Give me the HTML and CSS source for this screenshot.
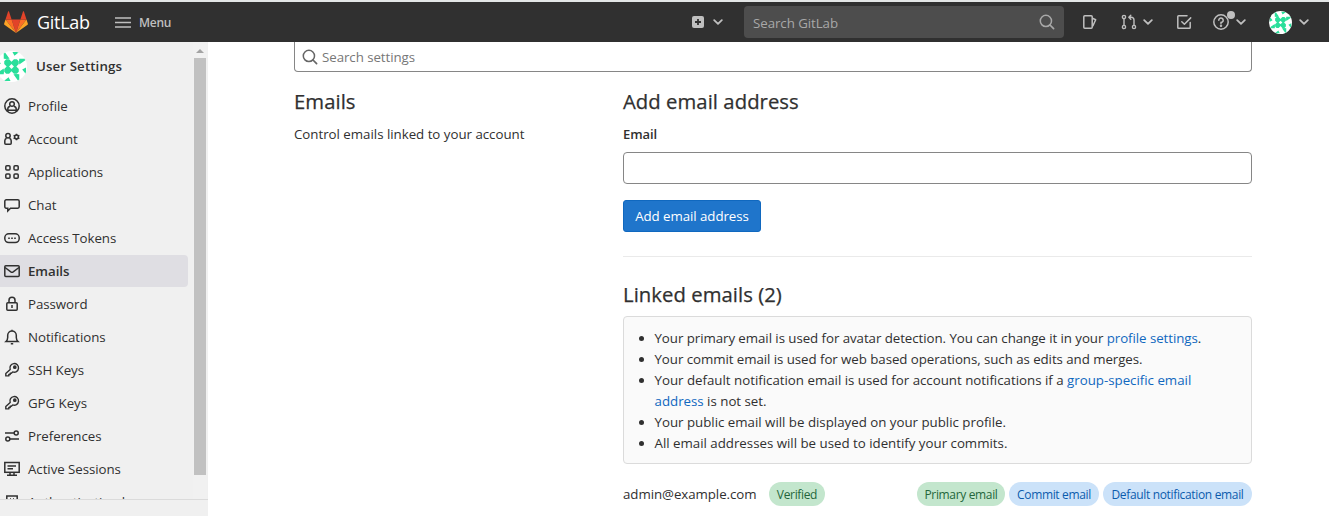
FILE: index.html
```html
<!DOCTYPE html>
<html lang="en">
<head>
<meta charset="utf-8">
<title>Emails · User Settings · GitLab</title>
<link rel="stylesheet" href="styles.css">
</head>
<body>
<svg class="defs" width="0" height="0">
  <symbol id="chevron" viewBox="0 0 10 6"><path d="M1.2 1.2 5 4.8l3.8-3.6" fill="none" stroke="currentColor" stroke-width="1.8" stroke-linecap="round" stroke-linejoin="round"/></symbol>
  <symbol id="search" viewBox="0 0 16 16"><circle cx="6.9" cy="6.9" r="5.6" fill="none" stroke="currentColor" stroke-width="1.5"/><path d="m11 11 3.6 3.6" stroke="currentColor" stroke-width="1.7" stroke-linecap="round"/></symbol>
  <symbol id="key" viewBox="0 0 16 16"><path d="M6.200 7.400a4.300 4.300 0 1 1 2.500 2.500L7.300 11.200H6.200v1.300H4.800v1.400H1.800v-2.300z" fill="none" stroke="currentColor" stroke-width="1.400" stroke-linejoin="round"/><circle cx="10.800" cy="5.200" r="1.100" fill="currentColor"/></symbol>
  <symbol id="avatar" viewBox="0 0 32 32">
    <rect width="32" height="32" fill="#fff"/>
    <g fill="#2adf9b">
      <path d="M10.500 8.500h3l2.500 2.500 2.500-2.500h3l2 2v3L21 16l2.500 2.500v3l-2 2h-3L16 21l-2.500 2.500h-3l-2-2v-3L11 16l-2.500-2.500v-3z"/>
      <g id="wing"><path d="M9 1l5 7H9zM17 1h7l-5 4zM24 8h7l-7 5z"/></g>
      <use href="#wing" transform="rotate(90 16 16)"/><use href="#wing" transform="rotate(180 16 16)"/><use href="#wing" transform="rotate(270 16 16)"/>
    </g>
    <path d="M16 13.500l2.500 2.500-2.500 2.500-2.500-2.500z" fill="#fff"/>
  </symbol>
</svg>
<header class="navbar">
  <svg class="logo" width="24" height="23" viewBox="0 0 24 23"><path d="M12 22 7.600 8.600h8.800z" fill="#e24329"/><path d="M12 22 7.600 8.600H1.500z" fill="#fc6d26"/><path d="M1.500 8.600.1 12.700c-.1.400 0 .8.300 1L12 22z" fill="#fca326"/><path d="M1.500 8.600h6.100L5 .6c-.1-.4-.7-.4-.9 0z" fill="#e24329"/><path d="m12 22 4.400-13.400h6.100z" fill="#fc6d26"/><path d="m22.500 8.600 1.400 4.100c.1.400 0 .8-.3 1L12 22z" fill="#fca326"/><path d="M22.500 8.600h-6.100L19 .6c.1-.4.7-.4.900 0z" fill="#e24329"/></svg>
  <span class="brand">GitLab</span>
  <svg class="burger" width="16" height="11" viewBox="0 0 16 11"><path d="M0 1h16M0 5.500h16M0 10h16" stroke="currentColor" stroke-width="1.300"/></svg>
  <span class="menu">Menu</span>
  <span class="spacer"></span>
  <svg class="plus" width="12" height="12" viewBox="0 0 12 12"><rect width="12" height="12" rx="2" fill="currentColor"/><path d="M6 3v6M3 6h6" stroke="#303030" stroke-width="1.800"/></svg>
  <svg class="chev" width="10" height="6"><use href="#chevron"/></svg>
  <div class="search-box"><span>Search GitLab</span><svg width="16" height="16"><use href="#search"/></svg></div>
  <svg class="issues" width="16" height="16" viewBox="0 0 16 16" fill="none" stroke="currentColor" stroke-width="1.500" stroke-linejoin="round"><rect x="1.800" y="1.800" width="8.400" height="12.400" rx="1"/><path d="M10.400 4.300l3.300 1.500-3 6.400"/></svg>
  <svg class="merge" width="16" height="16" viewBox="0 0 16 16" fill="none" stroke="currentColor" stroke-width="1.400" stroke-linecap="round" stroke-linejoin="round"><circle cx="3" cy="3" r="1.600"/><circle cx="3" cy="13" r="1.600"/><circle cx="13" cy="13" r="1.600"/><path d="M3 4.800v6.400M13 11.200V6a2.700 2.700 0 0 0-2.700-2.700H8.200M9.800 1.300l-2 2 2 2"/></svg>
  <svg class="chev c2" width="10" height="6"><use href="#chevron"/></svg>
  <svg class="todo" width="16" height="16" viewBox="0 0 16 16" fill="none" stroke="currentColor" stroke-width="1.500" stroke-linecap="round" stroke-linejoin="round"><path d="M11 1.800H2.600a.8.800 0 0 0-.8.800v10.800c0 .5.300.8.800.8h10.800c.5 0 .8-.3.800-.8V8.500M5.800 7.800l2.600 2.500 6.300-6.400"/></svg>
  <span class="help"><svg width="16" height="16" viewBox="0 0 16 16" fill="none" stroke="currentColor" stroke-width="1.500"><circle cx="8" cy="8" r="7.200"/><path d="M5.800 6.300A2.200 2.200 0 1 1 8 8.400v1" stroke-linecap="round"/><circle cx="8" cy="11.700" r=".5"/></svg><i class="dot"></i></span>
  <svg class="chev c3" width="10" height="6"><use href="#chevron"/></svg>
  <svg class="avatar-sm" width="23" height="23"><use href="#avatar"/></svg>
  <svg class="chev c4" width="10" height="6"><use href="#chevron"/></svg>
</header>
<div class="page">
  <aside class="sidebar">
    <div class="scroller">
      <nav class="nav">
        <div class="context"><svg class="avatar" width="31" height="31"><use href="#avatar"/></svg><span>User Settings</span></div>
        <a class="item"><svg viewBox="0 0 16 16"><circle cx="8" cy="8" r="7.200"/><circle cx="8" cy="6" r="2.300"/><path d="M3.800 13.500V11A2.500 2.500 0 0 1 6 8.500M12.200 13.500V11A2.500 2.500 0 0 0 10 8.500M4 12.300h8"/></svg><span>Profile</span></a>
        <a class="item"><svg viewBox="0 0 16 16"><circle cx="4" cy="4.800" r="2.200"/><path d="M2.600 7.200C1.300 7.600.8 8.600.8 9.800v2.400c0 .6.400 1 1 1h4.400c.6 0 1-.4 1-1V9.800c0-1.200-.5-2.200-1.800-2.600"/><circle cx="12.500" cy="6" r="1.900"/><path d="M12.500 2.700v1.600M12.500 7.700v1.600M9.600 4.300l1.400.8M14 6.900l1.400.8M9.600 7.700l1.400-.8M14 5.100l1.400-.8"/></svg><span>Account</span></a>
        <a class="item"><svg viewBox="0 0 16 16"><rect x="1.800" y="1.800" width="4.200" height="4.200" rx="1"/><rect x="10" y="1.800" width="4.200" height="4.200" rx="1"/><rect x="1.800" y="10" width="4.200" height="4.200" rx="1"/><rect x="10" y="10" width="4.200" height="4.200" rx="1"/></svg><span>Applications</span></a>
        <a class="item"><svg viewBox="0 0 16 16"><path d="M2.200 2.800h11.600c.8 0 1.400.6 1.400 1.400v5.600c0 .8-.6 1.400-1.400 1.400H6.500L3.800 14v-2.800H2.200c-.8 0-1.400-.6-1.400-1.400V4.200c0-.8.600-1.400 1.400-1.400z"/></svg><span>Chat</span></a>
        <a class="item"><svg viewBox="0 0 16 16"><rect x=".8" y="3.800" width="14.400" height="8.800" rx="4"/><path d="M4.200 8.200h1.600M7.200 8.200h1.600M10.200 8.200h1.600"/></svg><span>Access Tokens</span></a>
        <a class="item active"><svg viewBox="0 0 16 16"><rect x=".8" y="2.800" width="14.400" height="10.600" rx="1"/><path d="m1 4.500 5.800 4.300c.8.500 1.600.5 2.400 0L15 4.500"/></svg><span>Emails</span></a>
        <a class="item"><svg viewBox="0 0 16 16"><rect x="2.800" y="6.800" width="10.400" height="7.400" rx="1"/><path d="M5 6.500V4.200a3 3 0 0 1 6 0v2.300M8 9v3"/></svg><span>Password</span></a>
        <a class="item"><svg viewBox="0 0 16 16"><path d="M2 12.600c1.200-1.100 1.700-2.300 1.700-4V6.300a4.300 4.300 0 0 1 8.600 0v2.300c0 1.700.5 2.900 1.700 4zM6.800 14.700h2.400M8 .8V2"/></svg><span>Notifications</span></a>
        <a class="item"><svg><use href="#key"/></svg><span>SSH Keys</span></a>
        <a class="item"><svg><use href="#key"/></svg><span>GPG Keys</span></a>
        <a class="item"><svg viewBox="0 0 16 16"><circle cx="12.200" cy="4.900" r="2"/><circle cx="3.800" cy="11" r="2"/><path d="M1 4.900h9M6 11h9"/></svg><span>Preferences</span></a>
        <a class="item"><svg viewBox="0 0 16 16"><rect x=".8" y="1.500" width="14.400" height="9.800"/><path d="M3.500 5h8.500M3.500 7.800h5.500M6 11.500V14M10 11.500V14M3 14.200h10"/></svg><span>Active Sessions</span></a>
        <a class="item"><svg viewBox="0 0 16 16"><path d="M2.800 15V2h10.400v13M6 5h1M9 5h1M6 8h4"/></svg><span>Authentication log</span></a>
      </nav>
      <div class="scrollbar"><i class="arrow"></i><i class="thumb"></i></div>
    </div>
  </aside>
  <main class="content">
    <div class="settings-search"><svg width="16" height="16"><use href="#search"/></svg><span>Search settings</span></div>
    <div class="columns">
      <section class="intro"><h4>Emails</h4><p>Control emails linked to your account</p></section>
      <section class="form">
        <h4>Add email address</h4>
        <label class="label" for="email">Email</label>
        <input id="email" class="field" type="text">
        <button class="button">Add email address</button>
        <hr class="rule">
        <h4 class="h-linked">Linked emails (2)</h4>
        <ul class="notes">
          <li><span>Your primary email is used for avatar detection. You can change it in your <a>profile settings</a>.</span></li>
          <li><span>Your commit email is used for web based operations, such as edits and merges.</span></li>
          <li><span class="loose">Your default notification email is used for account notifications if a <a>group-specific email<br>address</a> is not set.</span></li>
          <li><span class="loose">Your public email will be displayed on your public profile.</span></li>
          <li><span class="loose">All email addresses will be used to identify your commits.</span></li>
        </ul>
        <div class="email-row">
          <span class="address">admin@example.com</span><span class="badge green verified">Verified</span>
          <span class="spacer"></span>
          <span class="badge green primary">Primary email</span><span class="badge blue commit">Commit email</span><span class="badge blue default">Default notification email</span>
        </div>
      </section>
    </div>
  </main>
</div>
</body>
</html>
```
FILE: styles.css
```css
* { box-sizing: border-box; }
body { margin: 0; height: 516px; overflow: hidden; background: #fff; color: #303030; font: 13.3px/20px "Open Sans", "Noto Sans", sans-serif; letter-spacing: -0.06px; }
.defs { display: block; height: 0; }
svg { display: block; flex: none; }
span { white-space: nowrap; }
.spacer { flex: 1; }
.navbar { display: flex; align-items: center; height: 42px; padding: 0 20px 0 4px; border-top: 2px solid #e3e6e6; background: #303030; color: #bfbfbf; }
.brand { width: 52px; margin-left: 9px; color: #fff; font-size: 18px; letter-spacing: -0.3px; }
.burger { margin-left: 26px; }
.menu { margin-left: 8px; padding-top: 1px; font-size: 12px; font-weight: 600; letter-spacing: -0.25px; }
.chev { margin-left: 9px; }
.search-box { display: flex; align-items: center; justify-content: space-between; width: 320px; height: 32px; margin-left: 21px; padding: 2px 9px 0 9px; border-radius: 4px; background: #4d4d4d; color: #a8a8a8; }
.search-box svg { margin-top: -2px; }
.issues { margin-left: 18px; }
.merge { margin-left: 23px; }
.c2 { margin-left: 6px; }
.todo { margin-left: 23px; }
.help { position: relative; margin-left: 21px; }
.dot { position: absolute; left: 14px; top: -3px; width: 8px; height: 8px; border-radius: 50%; background: #bfbfbf; }
.c3 { margin-left: 7px; }
.avatar-sm { margin-left: 23px; border-radius: 50%; }
.c4 { margin-left: 7px; }
.page { display: flex; height: 474px; }
.sidebar { width: 208px; background: #f0f0f0; }
.scroller { display: flex; height: 458px; border-bottom: 1px solid #dbdbdb; overflow: hidden; }
.nav { width: 188px; height: 457px; overflow: hidden; }
.context { display: flex; align-items: center; gap: 9px; height: 48px; margin-left: -4px; font-weight: 600; font-size: 13.3px; letter-spacing: 0.1px; }
.avatar { border-radius: 50%; }
.item { display: flex; align-items: center; gap: 8px; height: 32px; margin-bottom: 1px; padding-left: 4px; border-radius: 0 4px 4px 0; }
.item svg { width: 16px; height: 16px; fill: none; stroke: #303030; stroke-width: 1.500; }
.item.active { background: #dfdee3; font-weight: 600; }
.scrollbar { display: flex; flex-direction: column; align-items: center; width: 14px; margin-left: 5px; background: #f1f1f1; }
.arrow { width: 0; margin: 7px 0 5px; border: 4px solid transparent; border-top: 0; border-bottom-color: #a3a3a3; }
.thumb { width: 12px; height: 417px; background: #c1c1c1; }
.content { flex: 1; padding-left: 86px; }
.settings-search { display: flex; align-items: center; gap: 4px; width: 958px; height: 30px; padding-left: 7px; border: 1px solid #868686; border-top: 0; border-radius: 0 0 4px 4px; color: #777; }
.settings-search svg { color: #666; }
.columns { display: grid; grid-template-columns: 329px 629px; }
h4 { margin: 18px 0 0; font-size: 20.3px; line-height: 22px; font-weight: 500; letter-spacing: 0.05px; -webkit-text-stroke: 0.25px #303030; }
p { margin: 12px 0 0; letter-spacing: -0.02px; }
.label { display: block; margin-top: 12px; font-weight: 600; font-size: 13px; }
.field { display: block; width: 629px; height: 32px; margin-top: 8px; border: 1px solid #868686; border-radius: 4px; }
.button { display: block; width: 138px; height: 32px; margin-top: 16px; padding: 0; border: 1px solid #1068bf; border-radius: 3px; background: #1f75cb; color: #fff; font: inherit; letter-spacing: inherit; }
.rule { height: 1px; margin: 24px 0 0; border: 0; background: #eaeaea; }
.h-linked { margin-top: 26px; }
.notes { height: 148px; margin: 11px 0 0; padding: 11px 0 0 30.5px; border: 1px solid #dbdbdb; border-radius: 4px; background: #fafafa; line-height: 21px; }
.loose { letter-spacing: -0.01px; }
a { color: inherit; }
.notes a { color: #1068bf; }
.email-row { display: flex; align-items: center; height: 24px; margin-top: 18px; }
.address { width: 134px; }
.badge { height: 24px; margin-left: 4px; border-radius: 12px; font-size: 12px; line-height: 25px; text-align: center; letter-spacing: -0.34px; }
.green { background: #c3e6cd; color: #24663b; }
.blue { background: #cbe2f9; color: #0b5cad; }
.verified { width: 56px; margin-left: 12px; }
.primary { width: 88px; }
.commit { width: 90px; }
.default { width: 149px; }
```
